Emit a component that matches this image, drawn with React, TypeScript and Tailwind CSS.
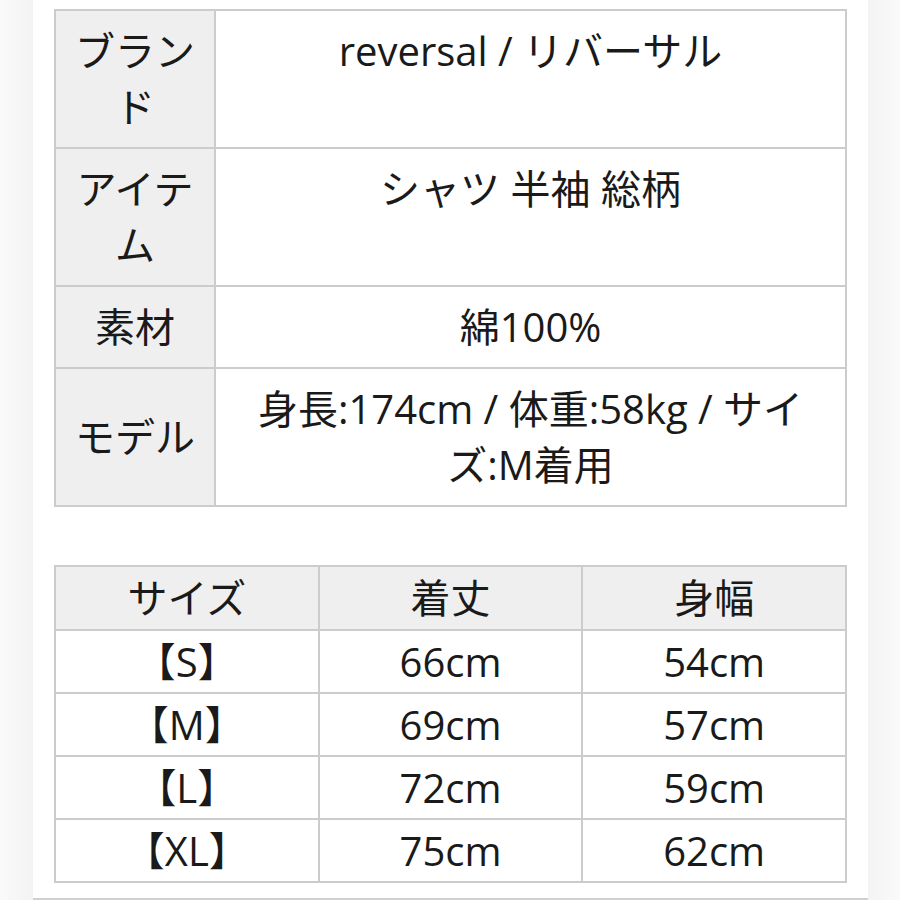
import React from 'react';

const info = [
  { label: 'ブランド', value: 'reversal / リバーサル' },
  { label: 'アイテム', value: 'シャツ 半袖 総柄' },
  { label: '素材', value: '綿100%' },
  { label: 'モデル', value: '身長:174cm / 体重:58kg / サイズ:M着用' },
];

const sizes = [
  ['【S】', '66cm', '54cm'],
  ['【M】', '69cm', '57cm'],
  ['【L】', '72cm', '59cm'],
  ['【XL】', '75cm', '62cm'],
];

export default function App() {
  return (
    <div
      className="flex h-[900px] w-[900px] overflow-hidden bg-white text-[#1a1a1a]"
      style={{ fontFamily: '"Open Sans", "Noto Sans CJK JP", sans-serif' }}
    >
      <div className="w-[33px] shrink-0 bg-gradient-to-r from-[#fafafa] to-[#f3f3f3]" />
      <div className="flex flex-1 flex-col border-b-2 border-[#d0d0d0] bg-white">
        {/* Product info */}
        <div className="px-[21px] pt-[9px]">
          <table className="w-full table-fixed border-collapse text-[40px] leading-[56px]">
            <colgroup>
              <col className="w-[160px]" />
              <col />
            </colgroup>
            <tbody>
              {info.map((row) => (
                <tr key={row.label}>
                  <th className="border-2 border-[#cccccc] bg-[#efefef] px-3 py-3 text-center align-middle font-normal">
                    {row.label}
                  </th>
                  <td className="border-2 border-[#cccccc] px-6 py-3 text-center align-top">
                    {row.value}
                  </td>
                </tr>
              ))}
            </tbody>
          </table>
        </div>

        {/* Size chart */}
        <div className="px-[21px] pt-[58px]">
          <table className="w-full table-fixed border-collapse text-[40px] leading-[56px]">
            <thead>
              <tr>
                {['サイズ', '着丈', '身幅'].map((h) => (
                  <th
                    key={h}
                    className="border-2 border-[#cccccc] bg-[#efefef] py-[3px] text-center font-normal"
                  >
                    {h}
                  </th>
                ))}
              </tr>
            </thead>
            <tbody>
              {sizes.map((r) => (
                <tr key={r[0]}>
                  {r.map((c, i) => (
                    <td key={i} className="border-2 border-[#cccccc] pt-[3px] pb-[2px] text-center">
                      {c}
                    </td>
                  ))}
                </tr>
              ))}
            </tbody>
          </table>
        </div>
      </div>
      <div className="w-[32px] shrink-0 bg-gradient-to-r from-[#f3f3f3] to-[#fafafa]" />
    </div>
  );
}
